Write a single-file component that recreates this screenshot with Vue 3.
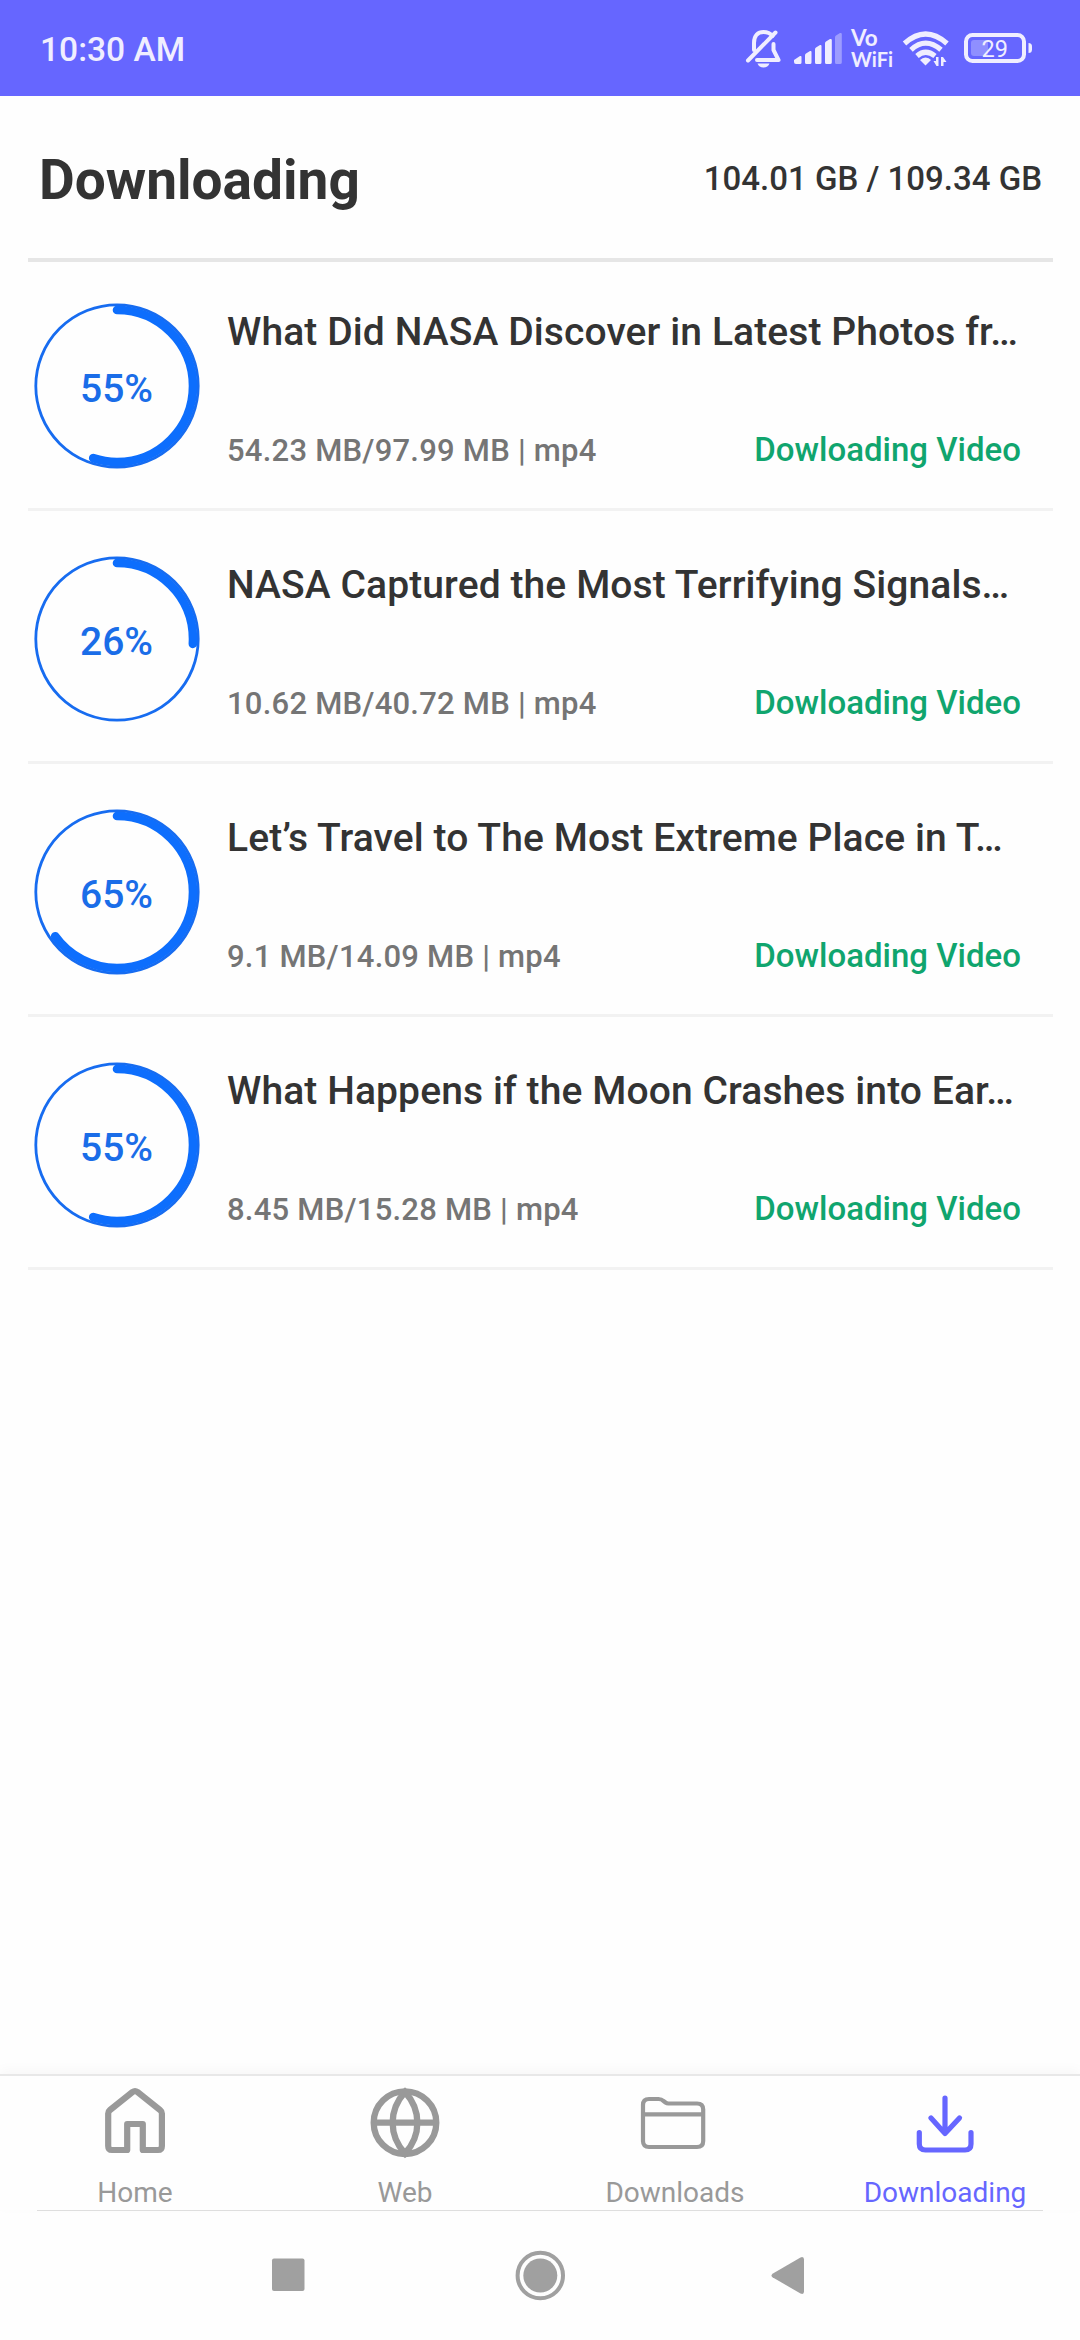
<script setup>
const CIRC = 2 * Math.PI * 76

const downloads = [
  { percent: 55, title: 'What Did NASA Discover in Latest Photos fr…', meta: '54.23 MB/97.99 MB | mp4' },
  { percent: 26, title: 'NASA Captured the Most Terrifying Signals…', meta: '10.62 MB/40.72 MB | mp4' },
  { percent: 65, title: 'Let’s Travel to The Most Extreme Place in T…', meta: '9.1 MB/14.09 MB | mp4' },
  { percent: 55, title: 'What Happens if the Moon Crashes into Ear…', meta: '8.45 MB/15.28 MB | mp4' },
]

const dash = (percent) => `${(CIRC * percent) / 100} ${CIRC}`
</script>

<template>
  <div class="screen">
    <div class="statusbar">
      <span class="clock">10:30 AM</span>
      <svg class="status-icons" width="350" height="96" viewBox="0 0 350 96">
        <g fill="none" stroke="#f0eeff" stroke-width="4" stroke-linecap="round" stroke-linejoin="round">
          <path d="M45.500 32.500 18 60.500" />
          <path d="M24 50V43C24 35.500 28 32 33.500 32C37.500 32 40.500 33.500 42.500 36" />
          <path d="M43.500 44V50L48.500 60H27" />
        </g>
        <path d="M27.500 63.500H39.500C38.500 66.300 36.500 67.500 33.500 67.500S28.500 66.300 27.500 63.500Z" fill="#f0eeff" />
        <g fill="#f0eeff">
          <path d="M64 60 70 56Q71.500 55.500 71.500 57V62.500Q71.500 64 70 64H66Q64 64 64 62Z" />
          <path d="M75 55.500Q75 54 76 53.500L80 51Q81.500 50.500 81.500 52V62.500Q81.500 64 80 64H76.500Q75 64 75 62.500Z" />
          <path d="M85 49.500Q85 48 86 47.500L90 45Q91.500 44.500 91.500 46V62.500Q91.500 64 90 64H86.500Q85 64 85 62.500Z" />
          <path d="M95 43.500Q95 42 96 41.500L100 39Q101.800 38.500 101.800 40V62.500Q101.800 64 100 64H96.500Q95 64 95 62.500Z" />
          <path d="M105 37.500Q105 36 106 35.500L110 33Q111.800 32.500 111.800 34V62.500Q111.800 64 110 64H106.500Q105 64 105 62.500Z" opacity=".4" />
        </g>
        <g fill="none" stroke="#f0eeff" stroke-width="5.200">
          <path d="M174.500 43.500Q195.500 24.500 217 43.500" />
          <path d="M181 49.800Q195.500 36.500 211 49.800" />
          <path d="M187 56Q195.500 48.500 205 56" />
        </g>
        <path d="M195.500 57.500Q199 57.500 201 60L195.500 65.500 190 60Q192.500 57.500 195.500 57.500Z" fill="#f0eeff" />
        <path d="M208.500 57V66H206.500L203.500 61H206V57ZM211 66V57H213L216.500 62H213.500V66Z" fill="#f0eeff" />
        <rect x="236" y="35" width="58" height="26" rx="6.500" fill="none" stroke="#f0eeff" stroke-width="4" />
        <path d="M298.500 43Q302 43 302 46.500V49.500Q302 53 298.500 53Z" fill="#f0eeff" />
        <rect x="241" y="40" width="17" height="16" rx="3" fill="#f0eeff" opacity=".3" />
        <text x="251.500" y="57" font-family="Roboto, sans-serif" font-size="23.500" fill="#f0eeff">29</text>
        <g fill="#f0eeff" font-family="Lato, sans-serif" font-weight="700">
          <text x="121" y="45.500" font-size="22.500">Vo</text>
          <text x="121" y="67" font-size="20.500" textLength="42" lengthAdjust="spacingAndGlyphs">WiFi</text>
        </g>
      </svg>
    </div>

    <header class="header">
      <h1>Downloading</h1>
      <span class="storage">104.01 GB / 109.34 GB</span>
    </header>

    <main class="list">
      <article v-for="(item, i) in downloads" :key="i" class="row">
        <div class="ring">
          <svg width="166" height="166" viewBox="-83 -83 166 166">
            <circle r="81.200" fill="none" stroke="#176cf0" stroke-width="2.800" />
            <circle
              r="76"
              fill="none"
              stroke="#0d6efd"
              stroke-width="8.600"
              stroke-linecap="round"
              :stroke-dasharray="dash(item.percent)"
              transform="rotate(-90)"
            />
          </svg>
          <span class="percent">{{ item.percent }}%</span>
        </div>
        <div class="info">
          <div class="title">{{ item.title }}</div>
          <div class="details">
            <span class="meta">{{ item.meta }}</span>
            <span class="state">Dowloading Video</span>
          </div>
        </div>
      </article>
    </main>

    <nav class="tabs">
      <div class="tab">
        <svg width="80" height="80" viewBox="0 0 80 80" fill="none" stroke="#999" stroke-width="6.200" stroke-linejoin="round">
          <path d="M13.200 31.500Q13.200 29.500 15 28L37.500 10Q40 8.200 42.500 10L65 28Q66.900 29.500 66.900 31.500V64Q66.900 68 63 68H47.800V42H32.200V68H17Q13.200 68 13.200 64Z" />
        </svg>
        <span>Home</span>
      </div>
      <div class="tab">
        <svg width="80" height="80" viewBox="0 0 80 80" fill="none" stroke="#999" stroke-width="6.300">
          <circle cx="40" cy="40.700" r="31.300" />
          <path d="M9 40.700H71M40 10C23.500 28 23.500 53.500 40 71.500C56.500 53.500 56.500 28 40 10Z" />
        </svg>
        <span>Web</span>
      </div>
      <div class="tab">
        <svg width="80" height="80" viewBox="0 0 80 80" fill="none" stroke="#999" stroke-width="4.200" stroke-linejoin="round">
          <path d="M8 59.500V23Q8 17 14 17H23.500Q26.500 17 28.500 19L30.500 20.500Q31.800 21.500 33.500 21.500H62Q68.200 21.500 68.200 27.500V59Q68.200 65 62 65H14Q8 65 8 59Z" />
          <path d="M8 32.300H68" />
        </svg>
        <span>Downloads</span>
      </div>
      <div class="tab active">
        <svg width="80" height="80" viewBox="0 0 80 80" fill="none" stroke="#6666ff" stroke-width="5.200" stroke-linecap="round" stroke-linejoin="round">
          <path d="M40 16V51M26 36 40 51.500 54.500 36M14.300 50.500V62Q14.300 68 20.500 68H60Q66 68 66 62V50.500" />
          <path d="M34.500 47 40 52.500 45.500 47Z" fill="#6666ff" stroke="none" />
        </svg>
        <span>Downloading</span>
      </div>
    </nav>
    <div class="system">
      <div class="rule"></div>
      <svg width="1080" height="129" viewBox="0 0 1080 129" fill="#a0a0a0">
        <rect x="272" y="47.600" width="32.500" height="32.500" rx="2" />
        <circle cx="540.300" cy="64.500" r="22.700" fill="none" stroke="#a0a0a0" stroke-width="4" />
        <circle cx="540.300" cy="64.500" r="17" />
        <path d="M772.500 62.700 800.500 46.400Q804 45 804 48.500V80.500Q804 84 800.500 82.500L772.500 66.300Q770.500 64.500 772.500 62.700Z" />
      </svg>
    </div>
  </div>
</template>

<style>
body {
  background: #fefefe;
}
</style>

<style scoped>
.screen {
  width: 1080px;
  height: 2340px;
  display: flex;
  flex-direction: column;
  overflow: hidden;
  background: #fefefe;
  color: #333;
  font-family: Roboto, sans-serif;
}

.statusbar {
  height: 96px;
  flex: none;
  display: flex;
  justify-content: space-between;
  background: #6666ff;
}

.clock {
  padding-left: 40px;
  color: #f0eeff;
  font-size: 33.6px;
  font-weight: 500;
  line-height: 99px;
}

.header {
  height: 162px;
  flex: none;
  box-sizing: border-box;
  display: flex;
  justify-content: space-between;
  padding: 0 38px 0 39px;
}

h1 {
  margin: 0;
  font-size: 55px;
  font-weight: 700;
  line-height: 168px;
}

.storage {
  font-size: 33px;
  font-weight: 500;
  line-height: 165px;
}

.list {
  flex: 1;
  margin: 0 27px 0 28px;
  border-top: 4px solid #e6e6e6;
}

.row {
  height: 253px;
  box-sizing: border-box;
  display: flex;
  border-bottom: 3px solid #f2f2f2;
}

.row:first-child {
  height: 249px;
}

.row:first-child .ring {
  padding-top: 41px;
}

.row:first-child .info {
  padding-top: 45px;
}

.ring {
  width: 166px;
  flex: none;
  display: grid;
  justify-items: center;
  align-items: start;
  padding: 45px 0 0 6px;
}

.ring > * {
  grid-area: 1 / 1;
}

.percent {
  margin-left: -1px;
  color: #1a6de8;
  font-size: 39px;
  font-weight: 500;
  line-height: 172px;
}

.info {
  flex: 1;
  padding: 49px 32px 0 27px;
}

.title {
  font-size: 39px;
  font-weight: 500;
  letter-spacing: 0.1px;
  line-height: 50px;
  white-space: nowrap;
}

.details {
  display: flex;
  justify-content: space-between;
  align-items: baseline;
  margin-top: 68px;
  line-height: 50px;
}

.meta {
  color: #757575;
  font-size: 31px;
  font-weight: 500;
  letter-spacing: 0.23px;
}

.state {
  color: #10a56e;
  font-size: 33px;
  font-weight: 500;
}

.tabs {
  height: 136px;
  flex: none;
  box-sizing: border-box;
  display: flex;
  border-top: 2px solid #e8e8e8;
  box-shadow: 0 -4px 12px rgba(0, 0, 0, 0.03);
}

.tab {
  width: 270px;
  display: flex;
  flex-direction: column;
  align-items: center;
  padding-top: 6px;
  color: #999;
  font-size: 28px;
}

.tab span {
  margin-top: 14px;
  line-height: 33px;
}

.tab.active {
  color: #6666ff;
}

.system {
  height: 130px;
  flex: none;
}

.rule {
  height: 1px;
  margin: 0 37px;
  background: #dedede;
}

.system svg {
  display: block;
}
</style>
